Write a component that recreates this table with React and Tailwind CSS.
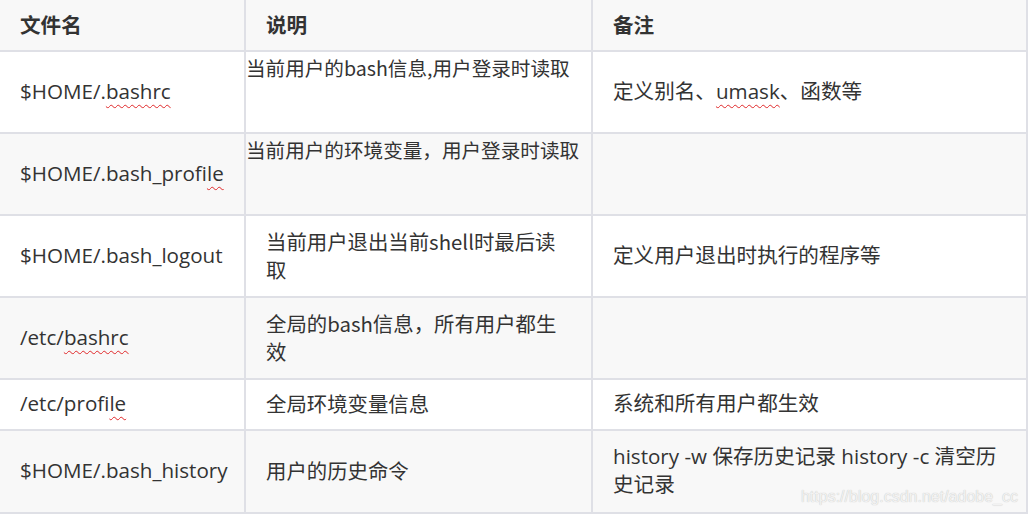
import React from 'react'

const wavy = 'underline decoration-wavy decoration-[#e0282a] decoration-1 underline-offset-[5px]'

function Sq({ children }) {
  return <span className={wavy}>{children}</span>
}

const rows = [
  {
    h: 'h-[82px]', bg: 'bg-white',
    name: <>$HOME/.<Sq>bashrc</Sq></>,
    desc: '当前用户的bash信息,用户登录时读取', raw: true,
    note: <>定义别名、<Sq>umask</Sq>、函数等</>,
  },
  {
    h: 'h-[82px]', bg: 'bg-[#f8f8f8]',
    name: <>$HOME/.bash_profi<Sq>le</Sq></>,
    desc: '当前用户的环境变量，用户登录时读取', raw: true,
    note: '',
  },
  {
    h: 'h-[82px]', bg: 'bg-white',
    name: '$HOME/.bash_logout',
    desc: '当前用户退出当前shell时最后读取',
    note: '定义用户退出时执行的程序等',
  },
  {
    h: 'h-[82px]', bg: 'bg-[#f8f8f8]',
    name: <>/etc/<Sq>bashrc</Sq></>,
    desc: '全局的bash信息，所有用户都生效',
    note: '',
  },
  {
    h: 'h-[51px]', bg: 'bg-white',
    name: <>/etc/profi<Sq>le</Sq></>,
    desc: '全局环境变量信息',
    note: '系统和所有用户都生效',
  },
  {
    h: 'h-[83px]', bg: 'bg-[#f8f8f8]',
    name: '$HOME/.bash_history',
    desc: '用户的历史命令',
    note: 'history -w 保存历史记录 history -c 清空历史记录',
  },
]

export default function App() {
  return (
    <div className="relative w-[1028px] h-[514px] overflow-hidden bg-white text-[#333] text-[20.6px] leading-[28px]"
      style={{ fontFamily: '"Open Sans", "Noto Sans CJK SC", sans-serif' }}>
      <table className="w-[1028px] table-fixed border-separate border-spacing-0">
        <thead>
          <tr className="bg-[#f8f8f8]">
            <th className="w-[246px] h-[52px] pl-5 text-left font-bold border-r-2 border-b-2 border-[#dfe0e6]">文件名</th>
            <th className="w-[347px] h-[52px] pl-5 text-left font-bold border-r-2 border-b-2 border-[#dfe0e6]">说明</th>
            <th className="w-[435px] h-[52px] pl-5 text-left font-bold border-r-2 border-b-2 border-[#dfe0e6]">备注</th>
          </tr>
        </thead>
        <tbody>
          {rows.map((r, i) => (
            <tr key={i} className={r.bg}>
              <td className={`${r.h} pl-5 pb-[3px] align-middle border-r-2 border-b-2 border-[#dfe0e6]`}>{r.name}</td>
              {r.raw ? (
                <td className={`${r.h} pt-[2px] align-top text-[19.6px] border-r-2 border-b-2 border-[#dfe0e6]`}
                  style={{ fontFamily: '"Noto Sans CJK SC", sans-serif' }}>{r.desc}</td>
              ) : (
                <td className={`${r.h} pl-5 pr-[32px] pb-[3px] align-middle text-[20.4px] border-r-2 border-b-2 border-[#dfe0e6]`}
                  style={{ fontFamily: '"Noto Sans CJK SC", sans-serif' }}>{r.desc}</td>
              )}
              <td className={`${r.h} pl-5 pr-5 pb-[3px] align-middle border-r-2 border-b-2 border-[#dfe0e6]`}>{r.note}</td>
            </tr>
          ))}
        </tbody>
      </table>
      <div className="absolute right-[10px] bottom-[7px] text-[16px] leading-[20px] text-[#f2f2f2] [text-shadow:0_0_1px_#b8b8b8]"
        style={{ fontFamily: '"Liberation Sans", Arial, sans-serif' }}>
        https://blog.csdn.net/adobe_cc
      </div>
    </div>
  )
}
